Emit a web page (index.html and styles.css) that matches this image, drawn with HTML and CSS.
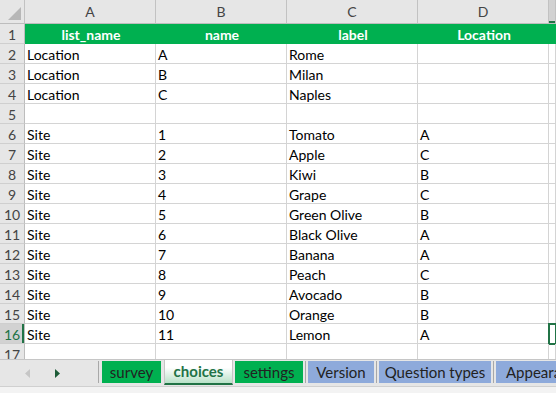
FILE: index.html
```html
<!DOCTYPE html>
<html lang="en">
<head>
  <meta charset="UTF-8" />
  <title>choices</title>
  <link rel="stylesheet" href="styles.css">
</head>
<body>
  <div class="sheet">
    <div class="row colhead">
      <div class="corner">
        <svg width="13" height="13" viewBox="0 0 13 13"><polygon points="13,0 13,13 0,13" fill="#b7b7b7"/></svg>
      </div>
      <div>A</div><div>B</div><div>C</div><div>D</div><div class="sel-col"></div>
    </div>

    <div class="row head">
      <div class="rh">1</div>
      <div>list_name</div><div>name</div><div>label</div><div>Location</div><div></div>
    </div>

    <div class="row"><div class="rh">2</div><div>Location</div><div>A</div><div>Rome</div><div></div><div></div></div>
    <div class="row"><div class="rh">3</div><div>Location</div><div>B</div><div>Milan</div><div></div><div></div></div>
    <div class="row"><div class="rh">4</div><div>Location</div><div>C</div><div>Naples</div><div></div><div></div></div>
    <div class="row"><div class="rh">5</div><div></div><div></div><div></div><div></div><div></div></div>
    <div class="row"><div class="rh">6</div><div>Site</div><div>1</div><div>Tomato</div><div>A</div><div></div></div>
    <div class="row"><div class="rh">7</div><div>Site</div><div>2</div><div>Apple</div><div>C</div><div></div></div>
    <div class="row"><div class="rh">8</div><div>Site</div><div>3</div><div>Kiwi</div><div>B</div><div></div></div>
    <div class="row"><div class="rh">9</div><div>Site</div><div>4</div><div>Grape</div><div>C</div><div></div></div>
    <div class="row"><div class="rh">10</div><div>Site</div><div>5</div><div>Green Olive</div><div>B</div><div></div></div>
    <div class="row"><div class="rh">11</div><div>Site</div><div>6</div><div>Black Olive</div><div>A</div><div></div></div>
    <div class="row"><div class="rh">12</div><div>Site</div><div>7</div><div>Banana</div><div>A</div><div></div></div>
    <div class="row"><div class="rh">13</div><div>Site</div><div>8</div><div>Peach</div><div>C</div><div></div></div>
    <div class="row"><div class="rh">14</div><div>Site</div><div>9</div><div>Avocado</div><div>B</div><div></div></div>
    <div class="row"><div class="rh">15</div><div>Site</div><div>10</div><div>Orange</div><div>B</div><div></div></div>
    <div class="row"><div class="rh sel">16</div><div>Site</div><div>11</div><div>Lemon</div><div>A</div><div class="active"></div></div>
    <div class="row"><div class="rh">17</div><div></div><div></div><div></div><div></div><div></div></div>
  </div>

  <div class="tabbar">
    <div class="nav">
      <svg width="6" height="9" viewBox="0 0 6 9"><polygon points="5,0 5,9 0,4.5" fill="#c6c6c6"/></svg>
      <svg width="6" height="9" viewBox="0 0 6 9"><polygon points="0,0 0,9 5,4.5" fill="#1d5c38"/></svg>
    </div>
    <i class="sep first"></i>
    <div class="tab green w-survey">survey</div>
    <div class="tab current">choices</div>
    <div class="tab green w-settings">settings</div>
    <i class="sep"></i>
    <div class="tab blue w-version">Version</div>
    <i class="sep"></i>
    <div class="tab blue w-types">Question types</div>
    <i class="sep"></i>
    <div class="tab blue w-appear">Appearance</div>
  </div>
  <div class="status"></div>
</body>
</html>
```

FILE: styles.css
```css
* {
  box-sizing: border-box;
}

html, body {
  margin: 0;
  width: 556px;
  height: 394px;
  overflow: hidden;
  background: #fff;
  font-family: Lato, "Liberation Sans", sans-serif;
  font-size: 14px;
  color: #000;
}

.sheet {
  height: 360px;
  overflow: hidden;
  border-bottom: 1px solid #c6c6c6;
}

.row {
  display: grid;
  grid-template-columns: 25px 131px 131px 131px 131px 1fr;
  height: 20px;
}

.row > div {
  border-right: 1px solid #d4d4d4;
  border-bottom: 1px solid #d4d4d4;
  padding-left: 2px;
  line-height: 21px;
  white-space: nowrap;
  overflow: hidden;
}

.row > .rh {
  background: #e6e6e6;
  border-right-color: #bdbdbd;
  border-bottom-color: #cfcfcf;
  color: #444;
  text-align: center;
  padding-left: 0;
}

.rh.sel {
  background: #d2d2d2;
  color: #217346;
  box-shadow: inset -2px 0 #217346;
}

.colhead {
  height: 24px;
}

.colhead > div {
  background: #e6e6e6;
  border-right-color: #c2c2c2;
  border-bottom-color: #bdbdbd;
  color: #444;
  text-align: center;
  line-height: 24px;
  padding-left: 0;
}

.colhead > .corner {
  display: flex;
  align-items: flex-end;
  justify-content: flex-end;
  padding: 0 3px 3px 0;
}

.colhead > .sel-col {
  background: #d2d2d2;
  box-shadow: inset 0 -2px #217346;
}

.head > div {
  background: #00b050;
  border-right-color: #00b050;
  border-bottom-color: #00b050;
  color: #fff;
  font-weight: bold;
  text-align: center;
}

.head > .rh {
  font-weight: normal;
}

.active {
  outline: 2px solid #217346;
  outline-offset: -1px;
}

.tabbar {
  display: flex;
  align-items: flex-start;
  height: 27px;
  overflow: hidden;
  background: #e6e6e6;
  border-bottom: 1px solid #d0d0d0;
}

.tabbar > * {
  flex-shrink: 0;
}

.nav {
  width: 98px;
  height: 26px;
  display: flex;
  align-items: center;
  padding-left: 25px;
  gap: 24px;
}

.sep {
  width: 1px;
  height: 22px;
  margin: 1px 2px 0;
  background: #a8a8a8;
}

.sep.first {
  margin-right: 3px;
  margin-left: 0;
}

.tab {
  height: 22px;
  margin-top: 1px;
  line-height: 22px;
  font-size: 15px;
  text-align: center;
  color: #222;
  white-space: nowrap;
  overflow: hidden;
}

.green {
  background: #00b050;
}

.blue {
  background: #8eaadb;
}

.w-survey {
  width: 59px;
  margin-right: 3px;
}

.w-settings {
  width: 68px;
}

.w-version {
  width: 66px;
}

.w-types {
  width: 112px;
}

.w-appear {
  width: 100px;
  text-align: left;
  padding-left: 10px;
}

.tab.current {
  width: 69px;
  height: 26px;
  margin-top: -1px;
  margin-right: 2px;
  border: 1px solid #c6c6c6;
  border-top: none;
  border-bottom: 2px solid #217346;
  background: linear-gradient(#ffffff 35%, #b9e2c9);
  color: #217346;
  font-weight: bold;
  line-height: 24px;
}

.status {
  height: 6px;
  background: #f3f3f3;
}
```
